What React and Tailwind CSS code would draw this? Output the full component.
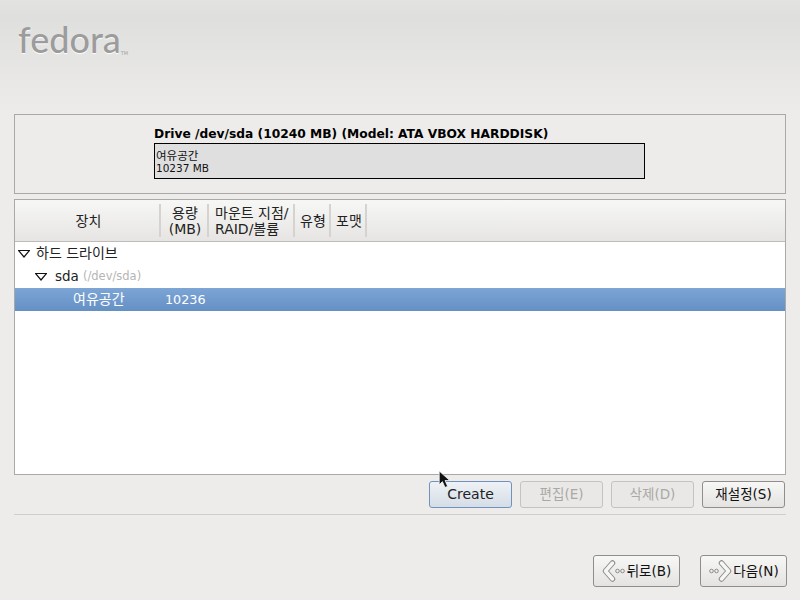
const font = { fontFamily: '"DejaVu Sans", "Noto Sans CJK KR", sans-serif' };

const Expander = () => (
  <svg width="12" height="8" viewBox="0 0 12 8" className="shrink-0">
    <path d="M0.5 0.5 H11.5 L6 7 Z" fill="#fff" stroke="#111" strokeWidth="1.2" />
  </svg>
);

const HeadCell = ({ className, children }) => (
  <div className={`flex items-center justify-center text-center text-[14px] leading-[16px] text-[#222] border-r-2 border-[#d4d3d0] my-[4px] pt-[1px] ${className}`}>
    {children}
  </div>
);

const Btn = ({ className = '', children }) => (
  <button className={`h-[27px] rounded-[3px] border text-[13.5px] flex items-center justify-center ${className}`}>
    {children}
  </button>
);

const Chevrons = ({ flip }) => (
  <svg width="24" height="24" viewBox="0 0 24 24" className={flip ? 'shrink-0 -scale-x-100' : 'shrink-0'}>
    <path d="M10.5 4 L3.5 12 L10.5 20" fill="none" stroke="#8c8c8a" strokeWidth="5.5" strokeLinecap="round" strokeLinejoin="round" />
    <path d="M10.5 4 L3.5 12 L10.5 20" fill="none" stroke="#f6f6f4" strokeWidth="3.5" strokeLinecap="round" strokeLinejoin="round" />
    <circle cx="15.5" cy="12" r="1.8" fill="none" stroke="#8c8c8a" />
    <circle cx="20.5" cy="12" r="1.8" fill="none" stroke="#8c8c8a" />
  </svg>
);

export default function App() {
  return (
    <div className="relative w-[800px] h-[600px] overflow-hidden flex flex-col bg-[#edecea]" style={font}>
      {/* header */}
      <div className="h-[114px] shrink-0 bg-gradient-to-b from-[#e3e3e1] via-[#dfdfdd] via-15% to-[#edecea] pl-[18px] pt-[12px] flex items-start">
        <span className="text-[36px] leading-[54px] font-medium text-[#9c9c9c] [text-shadow:0_1px_1px_#fff]" style={{ fontFamily: 'Lato, sans-serif' }}>fedora</span>
        <span className="text-[5px] mt-[38px] text-[#a3a3a3]">TM</span>
      </div>

      <div className="flex-1 flex flex-col px-[14px]">
        {/* drive panel */}
        <div className="h-[80px] shrink-0 border border-[#a9a9a7] pl-[139px] pt-[11px]">
          <div className="text-[12.25px] leading-[16px] font-bold text-black">Drive /dev/sda (10240 MB) (Model: ATA VBOX HARDDISK)</div>
          <div className="mt-[1px] w-[491px] h-[36px] border border-black bg-[#dfdfdf] pl-[1px] pt-[6px] text-[10.5px] leading-[13px] text-[#111]">
            <div className="text-[11.5px]">여유공간</div>
            <div className="-mt-[1px]">10237 MB</div>
          </div>
        </div>

        {/* device tree */}
        <div className="mt-[5px] h-[276px] shrink-0 border border-[#a9a9a7] bg-white flex flex-col">
          <div className="h-[42px] shrink-0 flex bg-gradient-to-b from-[#f7f7f6] to-[#e6e5e3] border-b border-[#bdbcb9]">
            <HeadCell className="w-[146px] pl-[3px]">장치</HeadCell>
            <HeadCell className="w-[48px] pl-[2px]"><span>용량<br />(MB)</span></HeadCell>
            <HeadCell className="w-[86px] !justify-start !text-left pl-[6px]"><span className="whitespace-nowrap">마운트 지점/<br />RAID/볼륨</span></HeadCell>
            <HeadCell className="w-[36px] pl-[2px]">유형</HeadCell>
            <HeadCell className="w-[36px] pl-[2px]">포맷</HeadCell>
          </div>
          <div className="h-[23px] flex items-center pl-[3px] text-[14px] text-[#222]">
            <Expander />
            <span className="ml-[6px]">하드 드라이브</span>
          </div>
          <div className="h-[23px] flex items-center pl-[20px] text-[13.5px] text-[#222]">
            <Expander />
            <span className="ml-[8px]">sda</span>
            <span className="ml-[4px] text-[11.5px] text-[#b5b5b5]">(/dev/sda)</span>
          </div>
          <div className="h-[23px] flex items-center text-white bg-gradient-to-b from-[#7da5d6] to-[#6490c4]">
            <span className="w-[150px] pl-[58px] text-[14px]">여유공간</span>
            <span className="text-[12.75px]">10236</span>
          </div>
        </div>

        {/* actions */}
        <div className="mt-[6px] flex justify-end gap-[8px] pr-[1px]">
          <Btn className="w-[83px] !text-[14px] border-[#6f93bd] bg-gradient-to-b from-[#eef2f6] to-[#d5dde6] text-[#222]">Create</Btn>
          <Btn className="w-[83px] border-[#c4c3c0] bg-[#e9e8e6] text-[#a9a8a5]">편집(E)</Btn>
          <Btn className="w-[83px] border-[#c4c3c0] bg-[#e9e8e6] text-[#a9a8a5]">삭제(D)</Btn>
          <Btn className="w-[83px] border-[#8f8e8b] bg-gradient-to-b from-[#f7f7f6] to-[#e4e3e1] text-[#111]">재설정(S)</Btn>
        </div>
        <div className="mt-[6px] border-t border-[#cfcecb]" />

        {/* nav */}
        <div className="mt-[40px] -mr-[1px] flex justify-end gap-[20px]">
          <Btn className="w-[87px] !h-[32px] border-[#8f8e8b] bg-gradient-to-b from-[#f7f7f6] to-[#e4e3e1] text-[#111] gap-[1px]">
            <Chevrons />
            <span>뒤로(B)</span>
          </Btn>
          <Btn className="w-[87px] !h-[32px] border-[#8f8e8b] bg-gradient-to-b from-[#f7f7f6] to-[#e4e3e1] text-[#111] gap-[1px]">
            <Chevrons flip />
            <span>다음(N)</span>
          </Btn>
        </div>
      </div>

      {/* mouse pointer */}
      <svg width="13" height="19" viewBox="0 0 12 18" className="absolute left-[438px] top-[470px]">
        <path d="M1 1 V14 L4 11 L6.5 16.5 L9 15.5 L6.5 10 H11 Z" fill="#111" stroke="#fff" strokeWidth="0.7" />
      </svg>
    </div>
  );
}
